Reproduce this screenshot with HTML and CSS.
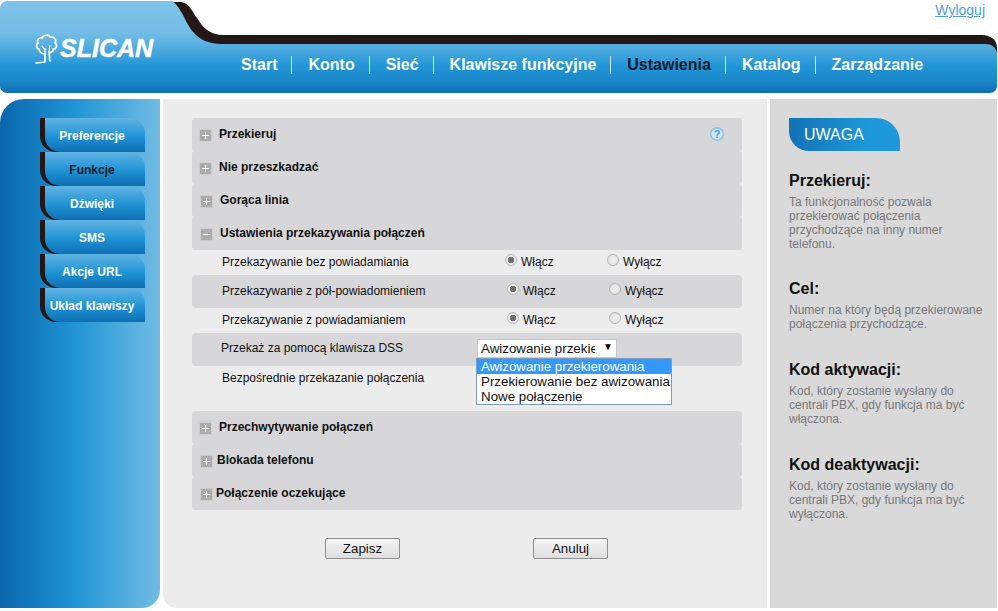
FILE: index.html
```html
<!DOCTYPE html>
<html lang="pl">
<head>
<meta charset="utf-8">
<title>Slican</title>
<link rel="stylesheet" href="styles.css">
</head>
<body>
<div class="page">
  <header class="header">
    <svg class="header-bg" width="998" height="94" viewBox="0 0 998 94">
      <defs>
        <linearGradient id="hb" gradientUnits="userSpaceOnUse" x1="0" y1="0" x2="0" y2="93">
          <stop offset="0" stop-color="#7fc4e9"/>
          <stop offset=".35" stop-color="#74bde6"/>
          <stop offset=".72" stop-color="#2095d6"/>
          <stop offset=".85" stop-color="#1b89cb"/>
          <stop offset="1" stop-color="#0e6eb4"/>
        </linearGradient>
      </defs>
      <path d="M170 2 H181 C190 3 192 12 197 18 C203 28 210 35 224 35 H982 C991 35 997 40 997 48 V60 H170Z" fill="#231815"/>
      <path d="M8 1 H172 C177 4 180 10 183 15 C189 27 196 44 222 44 H985 C993 44 997 48 997 55 V86 C997 90 994 93 990 93 H8 C3 93 0 90 0 86 V9 C0 4 3 1 8 1Z" fill="url(#hb)"/>
    </svg>
    <a class="logout" href="#">Wyloguj</a>
    <div class="logo">
      <svg class="tree" width="24" height="30" viewBox="0 0 24 30">
        <path d="M1 29 L10 28 V20 C7 20 4 18 4 15 C1 15 1 10 3 9 C1 6 5 3 7 4 C8 1 14 0 15 3 C19 2 22 6 20 9 C23 11 21 16 18 15 C19 18 15 19 14 18 C15 22 14 24 15 27" fill="none" stroke="#fff" stroke-width="1.7" stroke-linejoin="round" stroke-linecap="round"/>
        <path d="M10 20 V14 M10 16 L7 12 M14 18 L15 11" fill="none" stroke="#fff" stroke-width="1.3"/>
      </svg>
      <span class="logo-text">SLICAN</span>
    </div>
    <nav class="nav">
      <a class="nav-item" href="#">Start</a>
      <a class="nav-item" href="#">Konto</a>
      <a class="nav-item" href="#">Sieć</a>
      <a class="nav-item" href="#">Klawisze funkcyjne</a>
      <a class="nav-item nav-active" href="#">Ustawienia</a>
      <a class="nav-item" href="#">Katalog</a>
      <a class="nav-item" href="#">Zarządzanie</a>
    </nav>
  </header>

  <div class="main">
    <aside class="sidebar">
      <a class="tab" href="#"><span class="tab-in">Preferencje</span></a>
      <a class="tab tab-active" href="#"><span class="tab-in">Funkcje</span></a>
      <a class="tab" href="#"><span class="tab-in">Dźwięki</span></a>
      <a class="tab" href="#"><span class="tab-in">SMS</span></a>
      <a class="tab" href="#"><span class="tab-in">Akcje URL</span></a>
      <a class="tab" href="#"><span class="tab-in">Układ klawiszy</span></a>
    </aside>

    <section class="content">
      <div class="acc">
        <div class="acc-head"><span class="ico ico-plus"></span><b class="acc-title">Przekieruj</b>
          <svg class="help" width="16" height="16" viewBox="0 0 16 16">
            <circle cx="8" cy="8" r="6.3" fill="#d5e6f0" stroke="#7cc3e8" stroke-width="1.4"/>
            <text x="8" y="12" text-anchor="middle" class="help-q">?</text>
          </svg>
        </div>
        <div class="acc-head"><span class="ico ico-plus"></span><b class="acc-title">Nie przeszkadzać</b></div>
        <div class="acc-head acc-s1"><span class="ico ico-plus"></span><b class="acc-title">Gorąca linia</b></div>
        <div class="acc-head acc-s1"><span class="ico"></span><b class="acc-title">Ustawienia przekazywania połączeń</b></div>

        <div class="row row-plain">
          <span class="label">Przekazywanie bez powiadamiania</span>
          <label class="opt"><i class="radio radio-on"></i>Włącz</label>
          <label class="opt"><i class="radio"></i>Wyłącz</label>
        </div>
        <div class="row row-gray row-shift">
          <span class="label">Przekazywanie z pół-powiadomieniem</span>
          <label class="opt"><i class="radio radio-on"></i>Włącz</label>
          <label class="opt"><i class="radio"></i>Wyłącz</label>
        </div>
        <div class="row row-plain row-shift">
          <span class="label">Przekazywanie z powiadamianiem</span>
          <label class="opt"><i class="radio radio-on"></i>Włącz</label>
          <label class="opt"><i class="radio"></i>Wyłącz</label>
        </div>
        <div class="row row-gray row-sel">
          <span class="label">Przekaż za pomocą klawisza DSS</span>
          <div class="select-wrap">
            <div class="select"><span class="select-val">Awizowanie przekierowania</span><span class="select-arrow">▼</span></div>
            <ul class="menu">
              <li class="menu-on">Awizowanie przekierowania</li>
              <li>Przekierowanie bez awizowania</li>
              <li>Nowe połączenie</li>
            </ul>
          </div>
        </div>
        <div class="row row-tall">
          <span class="label">Bezpośrednie przekazanie połączenia</span>
        </div>

        <div class="acc-head"><span class="ico ico-plus"></span><b class="acc-title">Przechwytywanie połączeń</b></div>
        <div class="acc-head acc-s2"><span class="ico ico-plus"></span><b class="acc-title">Blokada telefonu</b></div>
        <div class="acc-head acc-s3"><span class="ico ico-plus"></span><b class="acc-title">Połączenie oczekujące</b></div>
      </div>
      <div class="actions">
        <button class="btn" type="button">Zapisz</button>
        <button class="btn" type="button">Anuluj</button>
      </div>
    </section>

    <aside class="notes">
      <div class="notes-tab">UWAGA</div>
      <div class="note">
        <h3>Przekieruj:</h3>
        <p>Ta funkcjonalność pozwala przekierować połączenia przychodzące na inny numer telefonu.</p>
      </div>
      <div class="note">
        <h3>Cel:</h3>
        <p>Numer na który będą przekierowane połączenia przychodzące.</p>
      </div>
      <div class="note">
        <h3>Kod aktywacji:</h3>
        <p>Kod, który zostanie wysłany do centrali PBX, gdy funkcja ma być włączona.</p>
      </div>
      <div class="note">
        <h3>Kod deaktywacji:</h3>
        <p>Kod, który zostanie wysłany do centrali PBX, gdy funkcja ma być wyłączona.</p>
      </div>
    </aside>
  </div>
</div>
</body>
</html>
```
FILE: styles.css
```css
* { box-sizing: border-box; }
html, body { margin: 0; padding: 0; background: #fff; }
body { font-family: "Liberation Sans", Arial, sans-serif; font-size: 12px; color: #111; overflow: hidden; }
a { text-decoration: none; color: inherit; }
.page { width: 998px; height: 611px; }

/* header */
.header { position: relative; height: 99px; }
.header-bg { position: absolute; left: 0; top: 0; }
.logout { position: absolute; right: 13px; top: 2px; font-size: 14px; color: #4f9fe0; text-decoration: underline; }
.logo { position: absolute; left: 35px; top: 34px; display: flex; align-items: center; }
.logo-text { font-family: "Liberation Sans", sans-serif; font-weight: 700; font-style: italic; font-size: 25px; line-height: 29px; margin-top: -2px; color: #fff; -webkit-text-stroke: 0.5px #fff; margin-left: 1px; }
.nav { position: relative; display: flex; padding: 56px 0 0 224px; }
.nav-item { display: block; height: 18px; line-height: 17px; padding: 0 14px 0 16px; font-size: 16px; font-weight: 700; color: #fff; border-left: 1px solid #cfe6f5; }
.nav-item:first-child { border-left-color: transparent; }
.nav-active { color: #08192b; }

/* layout */
.main { display: flex; gap: 3px; height: 509px; }
.sidebar { width: 160px; padding: 19px 0 0 40px; background: linear-gradient(to right, #0a66ad, #1f94d5 46%, #71bce3); border-radius: 24px 0 18px 0; }
.content { width: 604px; padding: 19px 25px 0 29px; background: #ececec; border-radius: 0 0 0 14px; }
.notes { width: 227px; padding: 19px 0 0 19px; background: #d9d9d9; }

/* side tabs */
.tab { display: block; width: 105px; height: 34px; background: linear-gradient(to right, #231815 20px, transparent 20px); border-radius: 0 0 0 16px; }
.tab-in { display: flex; align-items: center; justify-content: center; height: 34px; margin-left: 5px; padding: 2px 6px 0 0; font-size: 12px; font-weight: 700; color: #fff; background: linear-gradient(to bottom, #62b4e2, #1e93d5 55%, #0f6eb4); border-radius: 0 15px 0 15px; }
.tab-active .tab-in { color: #0a1a28; }

/* accordion */
.acc { width: 550px; }
.acc-head { position: relative; display: flex; align-items: center; height: 33px; padding: 0 0 0 7px; background: #d7d7d9; border-radius: 3px; }
.acc-s1 { padding-left: 8px; }
.acc-s2 { padding-left: 8px; }
.acc-s3 { padding-left: 8px; }
.ico { display: block; width: 13px; height: 13px; margin-top: 1px; border: 1px solid #cfcfcf; background: linear-gradient(#fff, #fff) center / 7px 1px no-repeat, #ababab; }
.ico-plus { background: linear-gradient(#fff, #fff) center / 7px 1px no-repeat, linear-gradient(#fff, #fff) center / 1px 7px no-repeat, #ababab; }
.acc-title { margin-left: 7px; font-size: 12px; margin-top: -1px; }
.acc-s2 .acc-title { margin-left: 4px; }
.acc-s3 .acc-title { margin-left: 3px; }
.help { position: absolute; left: 517px; top: 8px; }
.help-q { font: 700 11px "Liberation Sans", sans-serif; fill: #3b9fd8; }

.row { display: flex; align-items: flex-start; padding-left: 30px; background: transparent; }
.row-plain { height: 25px; padding-top: 5px; }
.row-gray { height: 33px; padding-top: 9px; background: #d7d7d9; border-radius: 4px; }
.row-sel { padding-left: 29px; padding-top: 6px; }
.row-tall { height: 45px; padding-top: 5px; }
.label { width: 283px; line-height: 14px; }
.row-shift .label { width: 285px; }
.row-sel .label { width: 255px; margin-top: 2px; }
.opt { display: flex; align-items: flex-start; width: 102px; line-height: 15px; }
.radio { display: block; width: 12px; height: 12px; margin: -1px 4px 0 0; border: 1px solid #b4b4b4; border-radius: 50%; background: radial-gradient(circle, #f2f2f2, #dcdcdc); }
.radio-on { background: radial-gradient(circle, #6e6e6e 0 3px, #ececec 3.5px); }

/* dropdown */
.select-wrap { position: relative; }
.select { display: flex; width: 140px; height: 19px; margin-left: 1px; padding: 0 0 0 3px; background: #fff; border: 1px solid #c8c8c8; font-size: 13.33px; line-height: 17px; }
.select-val { width: 114px; overflow: hidden; white-space: nowrap; }
.select-arrow { margin-left: 8px; font-size: 10px; line-height: 14px; color: #000; }
.menu { position: absolute; left: 0; top: 19px; width: 196px; margin: 0; padding: 0; list-style: none; background: #fff; border: 1px solid #7f9db9; font-size: 13.33px; line-height: 15px; color: #111; }
.menu li { padding-left: 4px; white-space: nowrap; }
.menu-on { background: #3399ff; color: #fff; }

/* buttons */
.actions { display: flex; gap: 133px; padding: 28px 0 0 133px; }
.btn { width: 75px; height: 21px; padding: 0; background: linear-gradient(to bottom, #f4f4f4, #dedede); border: 1px solid #8e8e8e; border-radius: 2px; font: 13.33px "Liberation Sans", sans-serif; color: #111; }

/* notes */
.notes-tab { width: 111px; height: 33px; padding-left: 15px; line-height: 33px; font-size: 16px; color: #fff; background: linear-gradient(to right, #1272b6, #1e98d8 70%); border-radius: 0 24px 0 20px; }
.note { width: 200px; margin-bottom: 29px; }
.notes-tab + .note { margin-top: 20px; margin-bottom: 28px; }
.note h3 { margin: 0; height: 24px; font-size: 16px; line-height: 20px; font-weight: 700; color: #111; }
.note p { margin: 0; width: 198px; font-size: 12px; line-height: 14px; color: #77777b; }
```
